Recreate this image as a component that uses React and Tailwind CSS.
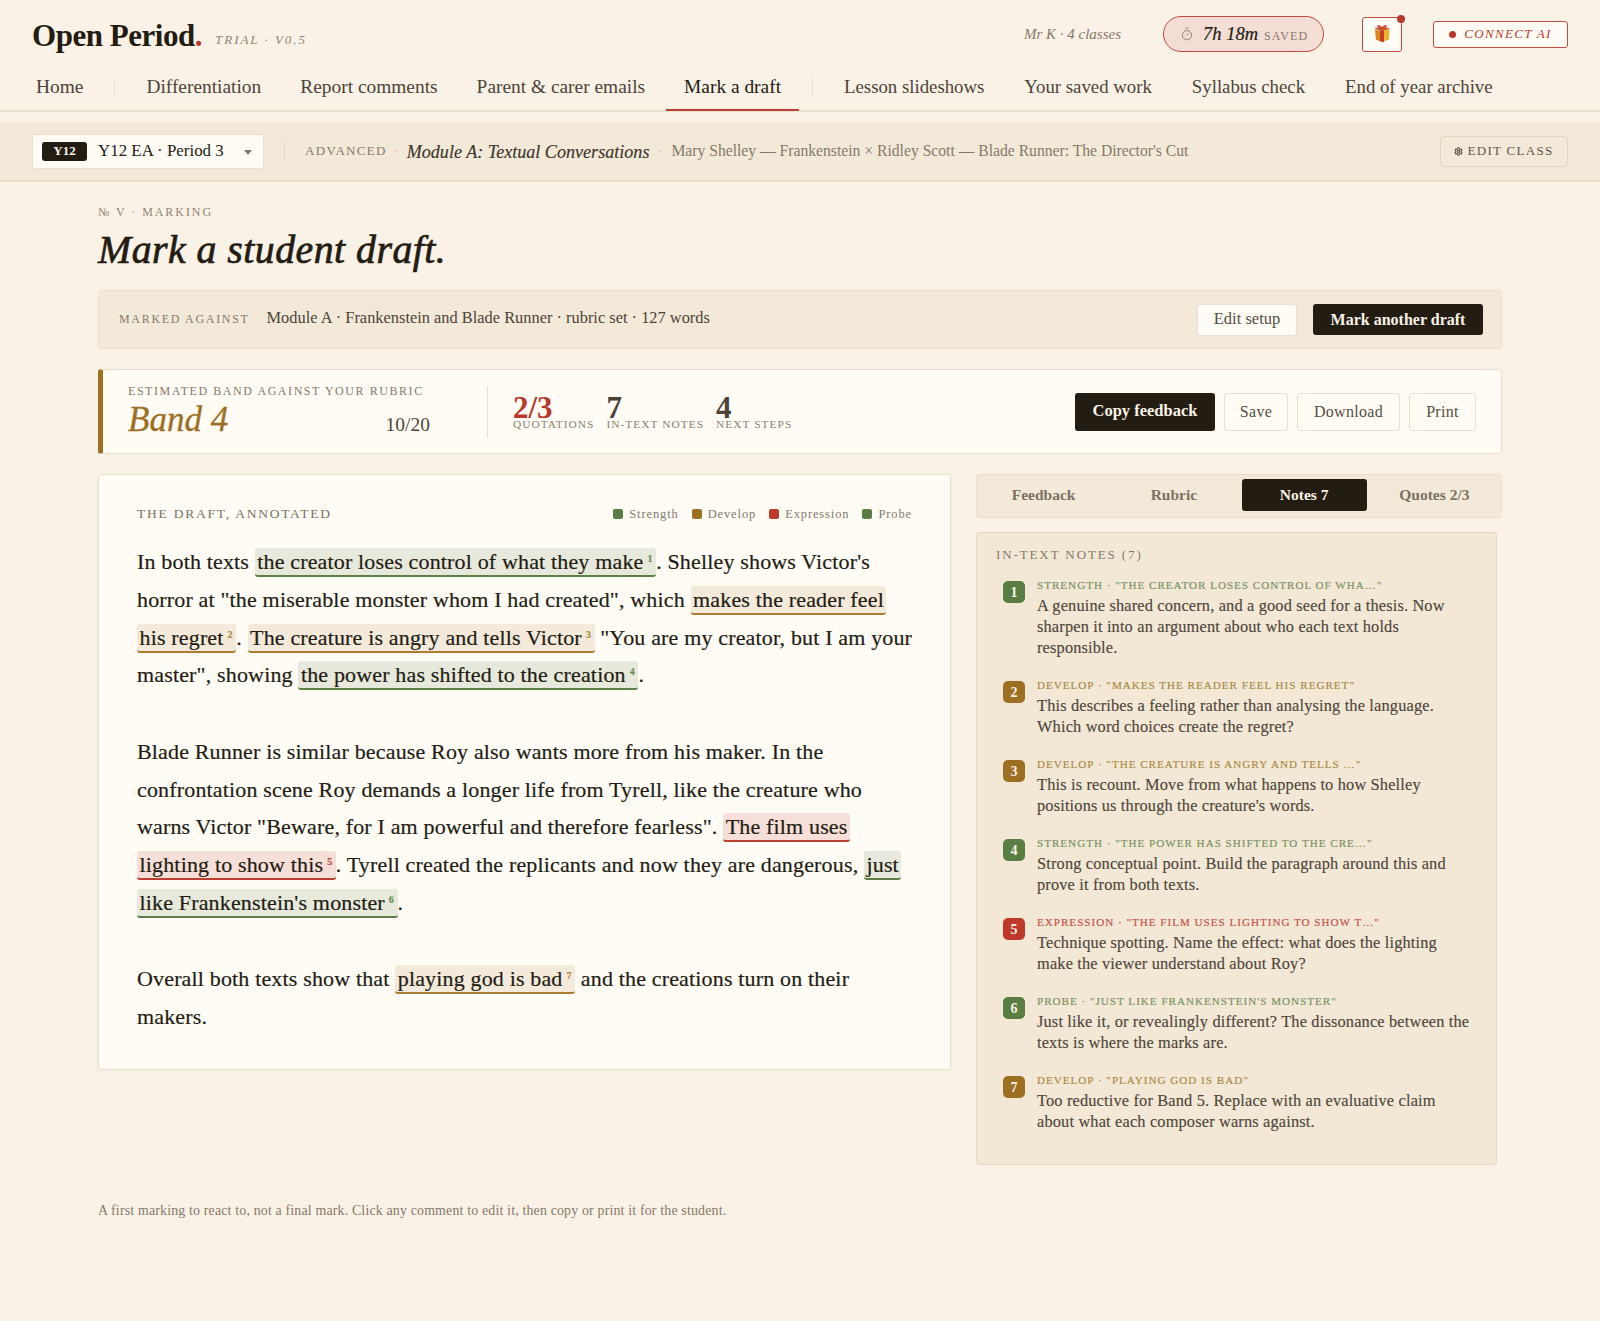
import { Timer, Settings } from "lucide-react";

const navLeft = ["Differentiation", "Report comments", "Parent & carer emails", "Mark a draft"];
const navRight = ["Lesson slideshows", "Your saved work", "Syllabus check", "End of year archive"];

const tones = {
  strength: { bg: "bg-[#e6e9db]", line: "border-[#5d7f45]", sup: "text-[#6d8c54]", badge: "bg-[#5a7d43]", tag: "text-[#7a9463]" },
  develop: { bg: "bg-[#f3eadb]", line: "border-[#ad7c30]", sup: "text-[#b08a45]", badge: "bg-[#9c6f23]", tag: "text-[#ac8a48]" },
  expression: { bg: "bg-[#f6dfd8]", line: "border-[#bb3f30]", sup: "text-[#c0493a]", badge: "bg-[#bd3a2b]", tag: "text-[#c4544a]" },
};

const notes = [
  { n: 1, tone: "strength", tag: 'Strength · "the creator loses control of wha…"', text: "A genuine shared concern, and a good seed for a thesis. Now sharpen it into an argument about who each text holds responsible." },
  { n: 2, tone: "develop", tag: 'Develop · "makes the reader feel his regret"', text: "This describes a feeling rather than analysing the language. Which word choices create the regret?" },
  { n: 3, tone: "develop", tag: 'Develop · "the creature is angry and tells …"', text: "This is recount. Move from what happens to how Shelley positions us through the creature's words." },
  { n: 4, tone: "strength", tag: 'Strength · "the power has shifted to the cre…"', text: "Strong conceptual point. Build the paragraph around this and prove it from both texts." },
  { n: 5, tone: "expression", tag: 'Expression · "the film uses lighting to show t…"', text: "Technique spotting. Name the effect: what does the lighting make the viewer understand about Roy?" },
  { n: 6, tone: "strength", tag: 'Probe · "just like Frankenstein\'s monster"', text: "Just like it, or revealingly different? The dissonance between the texts is where the marks are." },
  { n: 7, tone: "develop", tag: 'Develop · "playing god is bad"', text: "Too reductive for Band 5. Replace with an evaluative claim about what each composer warns against." },
];

function Mark({ tone, n, children }) {
  const t = tones[tone];
  return (
    <span className={`${t.bg} ${t.line} border-b-[2.5px] rounded-[3px] px-[2.5px] py-px`}>
      {children}
      {n && <sup className={`${t.sup} ml-[4px] mr-px text-[10px] font-bold leading-none align-[7px] top-0`}>{n}</sup>}
    </span>
  );
}

function GiftIcon() {
  return (
    <svg width="18" height="20" viewBox="0 0 18 20">
      <path d="M2 6.5 L9 8.5 L9 19 L3 16.8 Z" fill="#d98a1c" />
      <path d="M16.5 6 L9 8.5 L9 19 L16 16.5 Z" fill="#e8b62f" />
      <path d="M1.5 5.5 L9 3.5 L17 5.5 L9 8.5 Z" fill="#c9542a" />
      <path d="M7 8 L11 8 L11 19 L7 18.3 Z" fill="#c93a2b" />
      <path d="M9 4.5 C5 0.5 3 2 5 4.5 Z M9 4.5 C13 0.5 15 2 13 4.5 Z" fill="#d6402f" />
    </svg>
  );
}

function Legend({ color, label }) {
  return (
    <span className="flex items-center gap-[6px]">
      <span className={`w-[10px] h-[10px] rounded-[2px] ${color}`} />
      <span className="text-[12.5px] tracking-[0.07em] text-[#85796a]">{label}</span>
    </span>
  );
}

function Stat({ value, label, red }) {
  return (
    <div className="flex flex-col">
      <span className={`text-[31px] font-bold leading-[22px] ${red ? "text-[#b8392b]" : "text-[#4a4137]"}`}>{value}</span>
      <span className="text-[11.4px] leading-[14px] tracking-[0.09em] text-[#8b8071] -mt-[2px]">{label}</span>
    </div>
  );
}

function GhostButton({ width, children }) {
  return (
    <button className={`${width} h-[38px] rounded-[3px] border border-[#e8dfcd] bg-[#fffcf6] text-[16px] tracking-[0.02em] text-[#564d42]`}>
      {children}
    </button>
  );
}

export default function App() {
  return (
    <div className="min-h-[1321px] bg-[#faf2e6] font-['Liberation_Serif',serif] text-[#231c13]">
      <header className="border-b-2 border-[#e8dfcd]">
        <div className="h-[64px] flex items-center pl-8 pr-8 pt-[4px]">
          <div className="flex items-baseline mt-[3px]">
            <span className="text-[31px] font-bold tracking-[-0.015em] leading-none">Open Period<span className="text-[#b8392b]">.</span></span>
            <span className="ml-[13px] -translate-y-[2px] text-[13px] italic tracking-[0.15em] text-[#8f8473]">TRIAL · V0.5</span>
          </div>
          <div className="ml-auto flex items-center">
            <span className="text-[15px] italic text-[#85796a]">Mr K · 4 classes</span>
            <div className="ml-[42px] h-[36px] w-[161px] rounded-full border-[1.5px] border-[#c04a3c] bg-[#f4ddd5] flex items-center pl-[16px]">
              <Timer size={14} strokeWidth={1.5} className="text-[#85796a]" />
              <span className="ml-[9px] mt-[1px] text-[18.5px] italic text-[#231c13] [-webkit-text-stroke:0.2px]">7h 18m</span>
              <span className="ml-[6px] mt-[4px] text-[12px] tracking-[0.1em] text-[#85796a]">SAVED</span>
            </div>
            <button className="relative ml-[38px] w-[40px] h-[35px] rounded-[3px] border-[1.5px] border-[#c04a3c] bg-[#fffcf6] flex justify-center pt-[5px]">
              <GiftIcon />
              <span className="absolute -top-[3px] -right-[4px] w-2 h-2 rounded-full bg-[#b8392b]" />
            </button>
            <button className="ml-[31px] w-[135px] h-[27px] rounded-[3px] border-[1.5px] border-[#c04a3c] bg-[#fffcf6] flex items-center justify-center gap-2 text-[13px] italic tracking-[0.1em] text-[#b8392b]">
              <span className="w-[7px] h-[7px] rounded-full bg-[#b8392b]" />
              CONNECT AI
            </button>
          </div>
        </div>
        <nav className="h-[46px] flex items-center pl-[18px] text-[19.4px] text-[#4d4439]">
          <span className="px-[18px]">Home</span>
          <span className="mx-[13px] w-px h-[20px] bg-[#e8dfcd]" />
          {navLeft.map((item) => (
            <span
              key={item}
              className={`h-full flex items-center px-[18px] mr-[3px] last:mr-0 border-b-2 -mb-[2px] ${item === "Mark a draft" ? "border-[#bb3f30] text-[#231c13]" : "border-transparent"}`}
            >
              {item}
            </span>
          ))}
          <span className="ml-[10px] mr-[13px] w-px h-[20px] bg-[#e8dfcd]" />
          {navRight.map((item) => (
            <span key={item} className="px-[18px] mr-[4px] text-[18.8px]">{item}</span>
          ))}
        </nav>
      </header>

      <div className="mt-[10px] h-[60px] bg-[#f3e9d8] border-b-2 border-[#e8dfcd] flex items-center pl-8 pr-8">
        <div className="w-[232px] h-[35px] rounded-[3px] border border-[#e8dfcd] bg-[#fffcf6] flex items-center pl-[9px]">
          <span className="w-[45px] h-[19px] rounded-[3px] bg-[#231c13] text-[#faf2e6] text-[13px] font-bold flex items-center justify-center">Y12</span>
          <span className="ml-[11px] text-[16.9px]">Y12 EA · Period 3</span>
          <svg className="ml-[20px] mt-[3px]" width="8" height="5" viewBox="0 0 8 5"><path d="M0 0 L8 0 L4 5 Z" fill="#85796a" /></svg>
        </div>
        <span className="ml-[20px] w-px h-[18px] bg-[#e0d5bf]" />
        <span className="ml-[20px] text-[13px] tracking-[0.1em] text-[#85796a]">ADVANCED</span>
        <span className="mx-[8px] text-[#c9bda8] text-[12px]">·</span>
        <span className="mt-[3px] text-[18.1px] italic text-[#3d352b] [-webkit-text-stroke:0.15px]">Module A: Textual Conversations</span>
        <span className="mx-[9px] text-[#c9bda8] text-[12px]">·</span>
        <span className="text-[15.65px] text-[#85796a]">Mary Shelley — Frankenstein × Ridley Scott — Blade Runner: The Director's Cut</span>
        <button className="ml-auto w-[128px] h-[31px] rounded-[4px] border border-[#e0d5bf] flex items-center justify-center gap-1 text-[13px] tracking-[0.1em] text-[#5f5548]">
          <Settings size={9} strokeWidth={3} />
          EDIT CLASS
        </button>
      </div>

      <main className="px-[98px]">
        <div className="pt-[22px] text-[12px] leading-[16px] tracking-[0.16em] text-[#8f8473]">№ V · MARKING</div>
        <h1 className="mt-[7px] text-[39.8px] leading-[46px] italic tracking-[0.012em] [-webkit-text-stroke:0.7px]">Mark a student draft.</h1>

        <div className="mt-[17px] h-[59px] rounded-[3px] border border-[#e8dfcd] bg-[#f3e9d8] flex items-center pl-[20px] pr-[18px]">
          <span className="-mt-px text-[12px] tracking-[0.14em] text-[#85796a]">MARKED AGAINST</span>
          <span className="ml-[17px] -mt-[2px] text-[16.4px] text-[#4d4439]">Module A · Frankenstein and Blade Runner · rubric set · 127 words</span>
          <button className="ml-auto w-[100px] h-[32px] rounded-[3px] border border-[#e8dfcd] bg-[#fffcf6] text-[16.5px] text-[#564d42]">Edit setup</button>
          <button className="ml-[16px] w-[170px] h-[31px] rounded-[3px] bg-[#231c13] text-[16px] font-bold text-[#faf2e6]">Mark another draft</button>
        </div>

        <div className="mt-[20px] h-[85px] rounded-[3px] border border-[#e8dfcd] border-l-[5px] border-l-[#9c6f23] bg-[#fffcf6] flex items-center pl-[25px] pr-[25px]">
          <div className="w-[359px] shrink-0 flex flex-col">
            <span className="text-[12px] leading-[14px] tracking-[0.13em] text-[#85796a]">ESTIMATED BAND AGAINST YOUR RUBRIC</span>
            <div className="flex items-baseline mt-[3px]">
              <span className="text-[35px] leading-[38px] italic text-[#9c6f23] [-webkit-text-stroke:0.3px]">Band 4</span>
              <span className="ml-auto mr-[57px] text-[19.5px] text-[#4d4439]">10/20</span>
            </div>
          </div>
          <span className="w-px h-[52px] bg-[#e8dfcd]" />
          <div className="ml-[25px] mt-[5px] flex gap-[12px]">
            <Stat value="2/3" label="QUOTATIONS" red />
            <Stat value="7" label="IN-TEXT NOTES" />
            <Stat value="4" label="NEXT STEPS" />
          </div>
          <div className="ml-auto flex gap-[9px]">
            <button className="w-[140px] h-[38px] rounded-[3px] bg-[#231c13] text-[16.5px] font-bold text-[#faf2e6]">Copy feedback</button>
            <GhostButton width="w-[64px]">Save</GhostButton>
            <GhostButton width="w-[103px]">Download</GhostButton>
            <GhostButton width="w-[67px]">Print</GhostButton>
          </div>
        </div>

        <div className="mt-[20px] flex items-start gap-[25px]">
          <section className="w-[853px] h-[596px] shrink-0 rounded-[3px] border border-[#e8dfcd] bg-[#fffcf6] shadow-[0_1px_6px_rgba(120,90,40,0.05)] px-[38px] pt-[30px]">
            <div className="flex items-center justify-between h-[18px]">
              <span className="text-[13.5px] tracking-[0.13em] text-[#7c7162]">THE DRAFT, ANNOTATED</span>
              <div className="flex gap-[13px]">
                <Legend color="bg-[#5a7d43]" label="Strength" />
                <Legend color="bg-[#9c6f23]" label="Develop" />
                <Legend color="bg-[#bd3a2b]" label="Expression" />
                <Legend color="bg-[#5a7d43]" label="Probe" />
              </div>
            </div>
            <div className="mt-[20px] -mr-[4px] text-[22px] leading-[37.8px] tracking-[0.16px] space-y-[38.6px] [-webkit-text-stroke:0.2px]">
              <p>
                In both texts <Mark tone="strength" n="1">the creator loses control of what they make</Mark>. Shelley shows Victor's horror at "the miserable monster whom I had created", which <Mark tone="develop">makes the reader feel</Mark> <Mark tone="develop" n="2">his regret</Mark>. <Mark tone="develop" n="3">The creature is angry and tells Victor</Mark> "You are my creator, but I am your master", showing <Mark tone="strength" n="4">the power has shifted to the creation</Mark>.
              </p>
              <p>
                Blade Runner is similar because Roy also wants more from his maker. In the confrontation scene Roy demands a longer life from Tyrell, like the creature who warns Victor "Beware, for I am powerful and therefore fearless". <Mark tone="expression">The film uses</Mark> <Mark tone="expression" n="5">lighting to show this</Mark>. Tyrell created the replicants and now they are dangerous, <Mark tone="strength">just</Mark> <Mark tone="strength" n="6">like Frankenstein's monster</Mark>.
              </p>
              <p>
                Overall both texts show that <Mark tone="develop" n="7">playing god is bad</Mark> and the creations turn on their makers.
              </p>
            </div>
          </section>

          <aside className="flex-1 min-w-0">
            <div className="h-[44px] rounded-[3px] border border-[#e8dfcd] bg-[#f3e9d8] grid grid-cols-4 gap-[5px] pt-[4px] px-[4px] pb-[6px] text-[15.5px] font-bold text-[#7c7162]">
              <span className="flex items-center justify-center">Feedback</span>
              <span className="flex items-center justify-center">Rubric</span>
              <span className="flex items-center justify-center rounded-[3px] bg-[#231c13] text-[#faf2e6]">Notes 7</span>
              <span className="flex items-center justify-center">Quotes 2/3</span>
            </div>
            <div className="mt-[14px] mr-[5px] h-[633px] rounded-[3px] border border-[#e4d9c4] bg-[#f3e8d6] pl-[19px] pr-[20px] pt-[13px]">
              <div className="text-[13px] leading-[18px] tracking-[0.145em] text-[#85796a]">IN-TEXT NOTES (7)</div>
              <div className="mt-[13px] flex flex-col gap-[19px] pl-[7px]">
                {notes.map((note) => {
                  const t = tones[note.tone];
                  return (
                    <div key={note.n} className="flex gap-[12px]">
                      <span className={`${t.badge} mt-[4px] w-[22px] h-[22px] shrink-0 rounded-[5px] text-[#faf2e6] text-[14px] font-bold flex items-center justify-center`}>{note.n}</span>
                      <div>
                        <div className={`${t.tag} text-[11.1px] leading-[16px] uppercase tracking-[0.09em] [-webkit-text-stroke:0.2px]`}>{note.tag}</div>
                        <p className="mt-[2px] text-[16.35px] leading-[21px] tracking-[0.01em] text-[#4e463b] [-webkit-text-stroke:0.15px]">{note.text}</p>
                      </div>
                    </div>
                  );
                })}
              </div>
            </div>
          </aside>
        </div>

        <p className="mt-[37px] text-[13.9px] leading-[18px] tracking-[0.012em] text-[#85796a]">
          A first marking to react to, not a final mark. Click any comment to edit it, then copy or print it for the student.
        </p>
      </main>
    </div>
  );
}
